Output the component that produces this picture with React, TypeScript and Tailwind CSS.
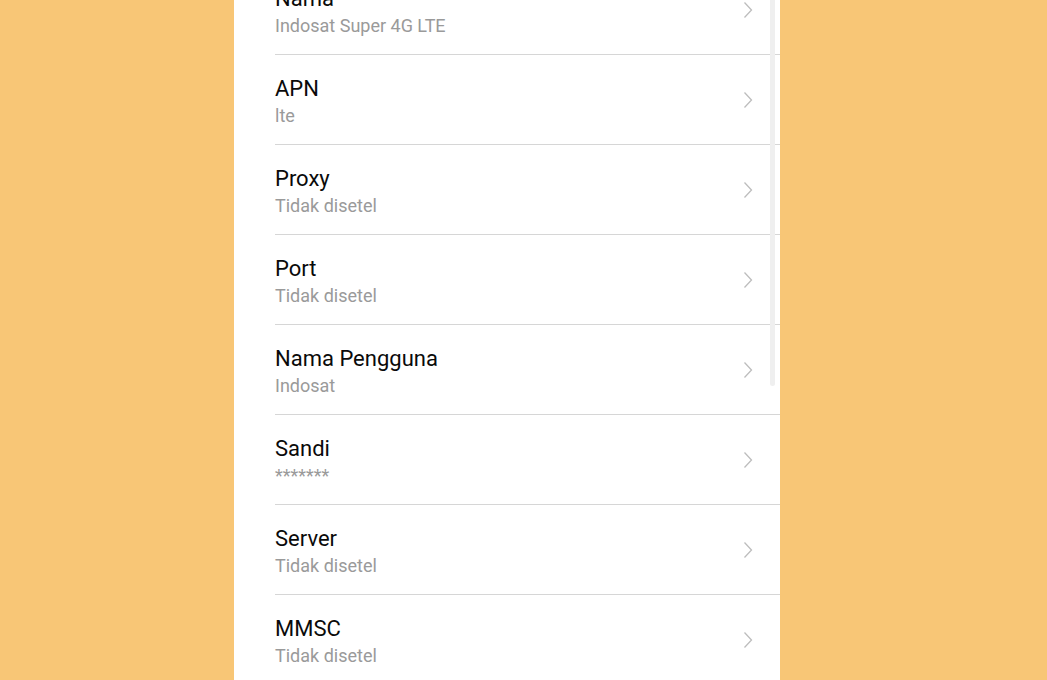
import React from "react";

const rows = [
  { t: "Nama", s: "Indosat Super 4G LTE" },
  { t: "APN", s: "lte" },
  { t: "Proxy", s: "Tidak disetel" },
  { t: "Port", s: "Tidak disetel" },
  { t: "Nama Pengguna", s: "Indosat" },
  { t: "Sandi", s: "*******" },
  { t: "Server", s: "Tidak disetel" },
  { t: "MMSC", s: "Tidak disetel" },
];

function Chevron() {
  return (
    <svg width="10" height="18" viewBox="0 0 10 18" className="shrink-0">
      <path d="M1.5 1.5 L8.5 9 L1.5 16.5" fill="none" stroke="#bdbdbd" strokeWidth="1.3" strokeLinecap="butt" strokeLinejoin="miter" />
    </svg>
  );
}

export default function App() {
  return (
    <div className="w-[1047px] h-[680px] overflow-hidden bg-[#f8c676] flex" style={{ fontFamily: "Roboto, 'Noto Sans', sans-serif" }}>
      <div className="relative w-[546px] h-full bg-white ml-[234px]">
        <div className="flex flex-col mt-[-35px]">
          {rows.map((r) => (
            <div key={r.t} className="h-[90px] pl-[41px]">
              <div className="h-full border-b border-[#d6d6d6] flex items-start">
                <div className="flex-1 pt-[20px]">
                  <div className="text-[22px] leading-[28px] text-[#0a0a0a]">{r.t}</div>
                  <div className="text-[18px] leading-[24px] text-[#9a9a9a] mt-[1px]">{r.s}</div>
                </div>
                <div className="h-full flex items-center pr-[27px] pt-[1px]">
                  <Chevron />
                </div>
              </div>
            </div>
          ))}
        </div>
        <div className="absolute left-[536px] top-0 w-[5px] h-[386px] rounded-b-full bg-[#efefef]" />
      </div>
    </div>
  );
}
